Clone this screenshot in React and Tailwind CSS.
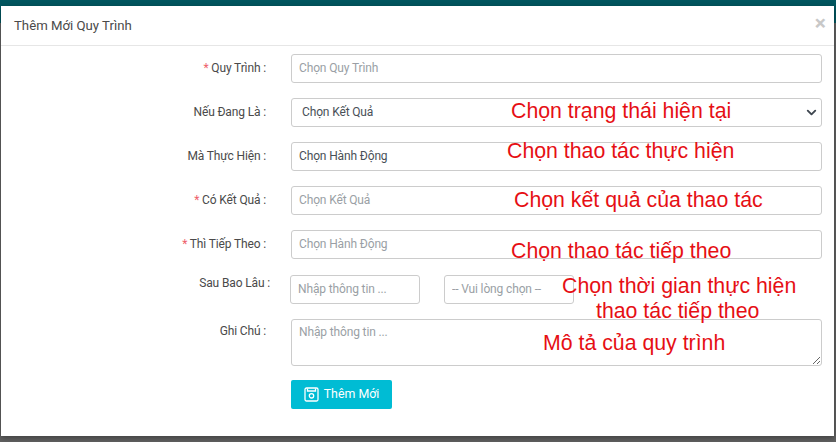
import React from "react";
import { ChevronDown } from "lucide-react";

const inputClass =
  "h-[29px] w-full rounded-[3px] border border-[#cccccc] bg-white px-[7px] pb-[1px] text-[12px] tracking-[-0.14px] text-[#495057] placeholder:text-[#9a9fa5] outline-none";

function Row({ label, required, className = "", labelClass = "pt-[6px]", children }) {
  return (
    <div className={`flex items-start ${className}`}>
      <label className={`w-[265px] shrink-0 text-right text-[12px] leading-[16px] tracking-[-0.14px] text-[#4a4a4a] ${labelClass}`}>
        {required && <span className="text-[#ee5f6b]">* </span>}
        {label} :
      </label>
      <div className="ml-[25px] flex-1">{children}</div>
    </div>
  );
}

function Note({ className, children }) {
  return (
    <div
      className={`pointer-events-none absolute whitespace-nowrap font-['Liberation_Sans',sans-serif] text-[21.3px] leading-[24px] text-[#e60f14] ${className}`}
    >
      {children}
    </div>
  );
}

function SaveIcon() {
  return (
    <svg width="15" height="15" viewBox="0 0 15 15" fill="none" stroke="white" strokeWidth="1.3">
      <rect x="1" y="1" width="13" height="13" rx="1.5" />
      <path d="M3.5 1.5v2.5h8v-2.5" />
      <circle cx="7.5" cy="8.8" r="2.2" />
    </svg>
  );
}

export default function App() {
  return (
    <div className="relative h-[442px] w-[836px] overflow-hidden bg-[#616161] font-['Roboto',sans-serif]">
      <div className="h-[23px] bg-[#00565f]" />

      {/* MODAL */}
      <div className="absolute left-[1px] top-[6px] h-[430px] w-[833px] bg-white shadow-[0_2px_6px_rgba(0,0,0,0.35)]">
        <div className="flex h-[40px] items-center justify-between border-b border-[#e6e6e6] pl-[13px] pr-[8px]">
          <h5 className="text-[13.2px] text-[#4a4a4a]">Thêm Mới Quy Trình</h5>
          <span className="-mt-[5px] text-[21px] font-bold leading-none text-[#c8c8c8]">×</span>
        </div>

        <div className="pr-[12px] pt-[8px]">
          <Row label="Quy Trình" required>
            <input className={inputClass} placeholder="Chọn Quy Trình" />
          </Row>
          <Row label="Nếu Đang Là" className="mt-[15px]">
            <div className="relative">
              <select className={`${inputClass} appearance-none pl-[10px]`} defaultValue="">
                <option value="">Chọn Kết Quả</option>
              </select>
              <ChevronDown
                size={15}
                strokeWidth={3}
                className="pointer-events-none absolute right-[3px] top-[7px] text-[#3f4750]"
              />
            </div>
          </Row>
          <Row label="Mà Thực Hiện" className="mt-[15px]">
            <input className={inputClass} defaultValue="Chọn Hành Động" />
          </Row>
          <Row label="Có Kết Quả" required className="mt-[15px]">
            <input className={inputClass} placeholder="Chọn Kết Quả" />
          </Row>
          <Row label="Thì Tiếp Theo" required className="mt-[15px]">
            <input className={inputClass} placeholder="Chọn Hành Động" />
          </Row>
          <Row label="Sau Bao Lâu" className="mt-[16px]" labelClass="relative left-[4px]">
            <div className="-ml-[1px] flex gap-[24px]">
              <input className={`${inputClass} !w-[130px]`} placeholder="Nhập thông tin ..." />
              <input className={`${inputClass} !w-[130px]`} placeholder="-- Vui lòng chọn --" />
            </div>
          </Row>
          <Row label="Ghi Chú" className="mt-[15px]" labelClass="pt-[4px]">
            <textarea
              className="block h-[47px] w-full rounded-[3px] border border-[#cccccc] px-[7px] py-[3px] text-[12px] tracking-[-0.14px] text-[#495057] placeholder:text-[#9a9fa5] outline-none"
              placeholder="Nhập thông tin ..."
            />
            <button className="mt-[14px] flex h-[29px] w-[101px] items-center justify-center gap-[5px] rounded-[2px] bg-[#00bcd4] text-[12.4px] text-white">
              <SaveIcon />
              Thêm Mới
            </button>
          </Row>
        </div>

        {/* ANNOTATIONS */}
        <Note className="left-[510px] top-[93px]">Chọn trạng thái hiện tại</Note>
        <Note className="left-[506px] top-[133px]">Chọn thao tác thực hiện</Note>
        <Note className="left-[513px] top-[182px]">Chọn kết quả của thao tác</Note>
        <Note className="left-[510px] top-[233px]">Chọn thao tác tiếp theo</Note>
        <Note className="left-[561px] top-[268px]">Chọn thời gian thực hiện</Note>
        <Note className="left-[595px] top-[293px]">thao tác tiếp theo</Note>
        <Note className="left-[542px] top-[325px]">Mô tả của quy trình</Note>
      </div>
    </div>
  );
}
